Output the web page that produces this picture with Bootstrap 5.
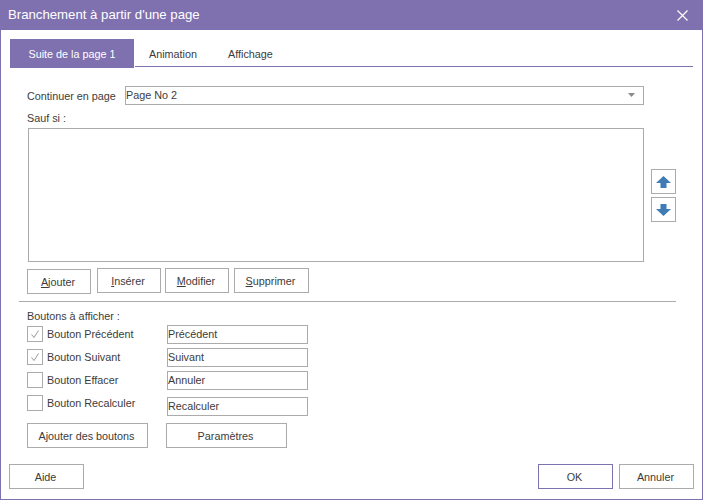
<!DOCTYPE html>
<html lang="fr">
<head>
<meta charset="utf-8">
<title>Branchement à partir d'une page</title>
<link href="https://cdn.jsdelivr.net/npm/bootstrap@5.3.0/dist/css/bootstrap.min.css" rel="stylesheet">
<style>
html,body{margin:0;height:500px;overflow:hidden;background:#fff}
body{font-family:"Liberation Sans",Arial,sans-serif;font-size:10.8px;color:#3c3c3c;line-height:14px}
.dlg{width:703px;height:500px;border:solid #7f70b0;border-width:0 1px 1px 1px;display:flex;flex-direction:column}
.ttl{height:30px;background:#7f70b0;color:#fff;font-size:13.2px;padding:0 14px 0 7px;flex:none}
.tabbar{margin:9px 9px 0 9px;height:29px;flex:none}
.tabon{width:124px;background:#7f70b0;color:#fff;height:29px}
.tabrest{flex:1;border-bottom:1px solid #7f70b0;margin-left:1px;height:28px;padding-left:14px;gap:31px;padding-top:3px}
.zone{height:19px;border:1px solid #ababab;background:#fff;padding:0 0 1px 0}
.rowpage{margin:18px 0 0 26px;width:617px;gap:9px;height:19px}
.lblpage{width:89px;flex:none}
.lblsauf{margin:6px 0 0 26px;height:14px}
.midrow{margin:3px 0 0 27px;height:134px;gap:7px}
.lst{width:616px;height:134px;border:1px solid #ababab}
.arrows{gap:3px;padding-top:41px}
.sq{width:25px;height:25px;border:1px solid #ababab;background:#fff;padding:0 1px 0 0}
.btnline{margin:6px 0 0 26px;height:25px;align-items:flex-start}
.wbtn{height:25px;border:1px solid #ababab;background:#fff;color:#3c3c3c;font-size:10.8px;line-height:14px;padding:0 2px 0 0;border-radius:0}
.wbtn:hover{background:#fff;border-color:#ababab;color:#3c3c3c}
.b-aj{width:64px;margin-top:1px;margin-right:6px}
.b-in{width:64px;margin-right:4px}
.b-mo{width:64px;margin-right:5px}
.b-su{width:75px}
.sep{height:1px;background:#ababab;margin:8px 26px 0 18px;flex:none}
.lblbtn{margin:7px 0 0 26px;height:15px}
.optrow{margin-left:26px;width:281px;height:19px}
.r1{margin-top:1px}.r2,.r3{margin-top:4px}.r4{margin-top:7px}
.bx{width:16px;height:16px;border:1px solid #ababab;background:#fff;flex:none;margin-right:4px}
.optlbl{width:120px;flex:none}
.r1 .optlbl,.r1 .bx,.r2 .optlbl,.r2 .bx{margin-top:-1px}
.r3 .optlbl,.r3 .bx{margin-top:-1px}
.r4 .optlbl,.r4 .bx{margin-top:-7px}
.optin{width:141px;flex:none}
.addline{margin:7px 0 0 26px;gap:18px}
.w121{width:121px}
.foot{margin:16px 8px 0 8px}
.duo{gap:6px}
.w75{width:75px}
.okb,.okb:hover{border-color:#7f70b0}
</style>
</head>
<body>
<div class="dlg">
  <div class="ttl d-flex align-items-center justify-content-between">
    <span>Branchement à partir d'une page</span>
    <svg width="11" height="11" viewBox="0 0 11 11"><path d="M.5.5l10 10M10.500.5l-10 10" stroke="#fff" stroke-width="1.2" fill="none"/></svg>
  </div>
  <div class="tabbar d-flex">
    <div class="tabon d-flex align-items-center justify-content-center">Suite de la page 1</div>
    <div class="tabrest d-flex align-items-center"><span>Animation</span><span>Affichage</span></div>
  </div>
  <div class="rowpage d-flex align-items-center">
    <span class="lblpage text-nowrap">Continuer en page</span>
    <div class="zone flex-grow-1 d-flex align-items-center justify-content-between">
      <span>Page No 2</span>
      <svg class="me-2" width="7" height="4" viewBox="0 0 7 4"><path d="M0 0h7L3.500 4z" fill="#8a8a8a"/></svg>
    </div>
  </div>
  <div class="lblsauf">Sauf si :</div>
  <div class="midrow d-flex">
    <div class="lst"></div>
    <div class="arrows d-flex flex-column">
      <button class="sq d-flex align-items-center justify-content-center" type="button" aria-label="Monter"><svg width="15" height="12" viewBox="0 0 15 12"><path d="M7.500 0L15 7h-4.500v5h-6V7H0z" fill="#3f7cb6"/></svg></button>
      <button class="sq d-flex align-items-center justify-content-center" type="button" aria-label="Descendre"><svg width="15" height="12" viewBox="0 0 15 12"><path d="M7.500 12L15 5h-4.500V0h-6v5H0z" fill="#3f7cb6"/></svg></button>
    </div>
  </div>
  <div class="btnline d-flex">
    <button class="btn wbtn b-aj" type="button"><u>A</u>jouter</button>
    <button class="btn wbtn b-in" type="button"><u>I</u>nsérer</button>
    <button class="btn wbtn b-mo" type="button"><u>M</u>odifier</button>
    <button class="btn wbtn b-su" type="button"><u>S</u>upprimer</button>
  </div>
  <div class="sep"></div>
  <div class="lblbtn">Boutons à afficher :</div>
  <div class="optrow r1 d-flex align-items-center">
    <div class="bx d-flex align-items-center justify-content-center"><svg width="10" height="10" viewBox="0 0 10 10"><path d="M1.500 5.500L4 8.500 8.500 1.500" stroke="#9a9a9a" fill="none"/></svg></div>
    <span class="optlbl">Bouton Précédent</span>
    <div class="zone optin d-flex align-items-center">Précédent</div>
  </div>
  <div class="optrow r2 d-flex align-items-center">
    <div class="bx d-flex align-items-center justify-content-center"><svg width="10" height="10" viewBox="0 0 10 10"><path d="M1.500 5.500L4 8.500 8.500 1.500" stroke="#9a9a9a" fill="none"/></svg></div>
    <span class="optlbl">Bouton Suivant</span>
    <div class="zone optin d-flex align-items-center">Suivant</div>
  </div>
  <div class="optrow r3 d-flex align-items-center">
    <div class="bx"></div>
    <span class="optlbl">Bouton Effacer</span>
    <div class="zone optin d-flex align-items-center">Annuler</div>
  </div>
  <div class="optrow r4 d-flex align-items-center">
    <div class="bx"></div>
    <span class="optlbl">Bouton Recalculer</span>
    <div class="zone optin d-flex align-items-center">Recalculer</div>
  </div>
  <div class="addline d-flex">
    <button class="btn wbtn w121" type="button">Ajouter des boutons</button>
    <button class="btn wbtn w121" type="button">Paramètres</button>
  </div>
  <div class="foot d-flex justify-content-between">
    <button class="btn wbtn w75" type="button">Aide</button>
    <div class="duo d-flex">
      <button class="btn wbtn w75 okb" type="button">OK</button>
      <button class="btn wbtn w75" type="button">Annuler</button>
    </div>
  </div>
</div>
<script src="https://cdn.jsdelivr.net/npm/bootstrap@5.3.0/dist/js/bootstrap.bundle.min.js"></script>
</body>
</html>
